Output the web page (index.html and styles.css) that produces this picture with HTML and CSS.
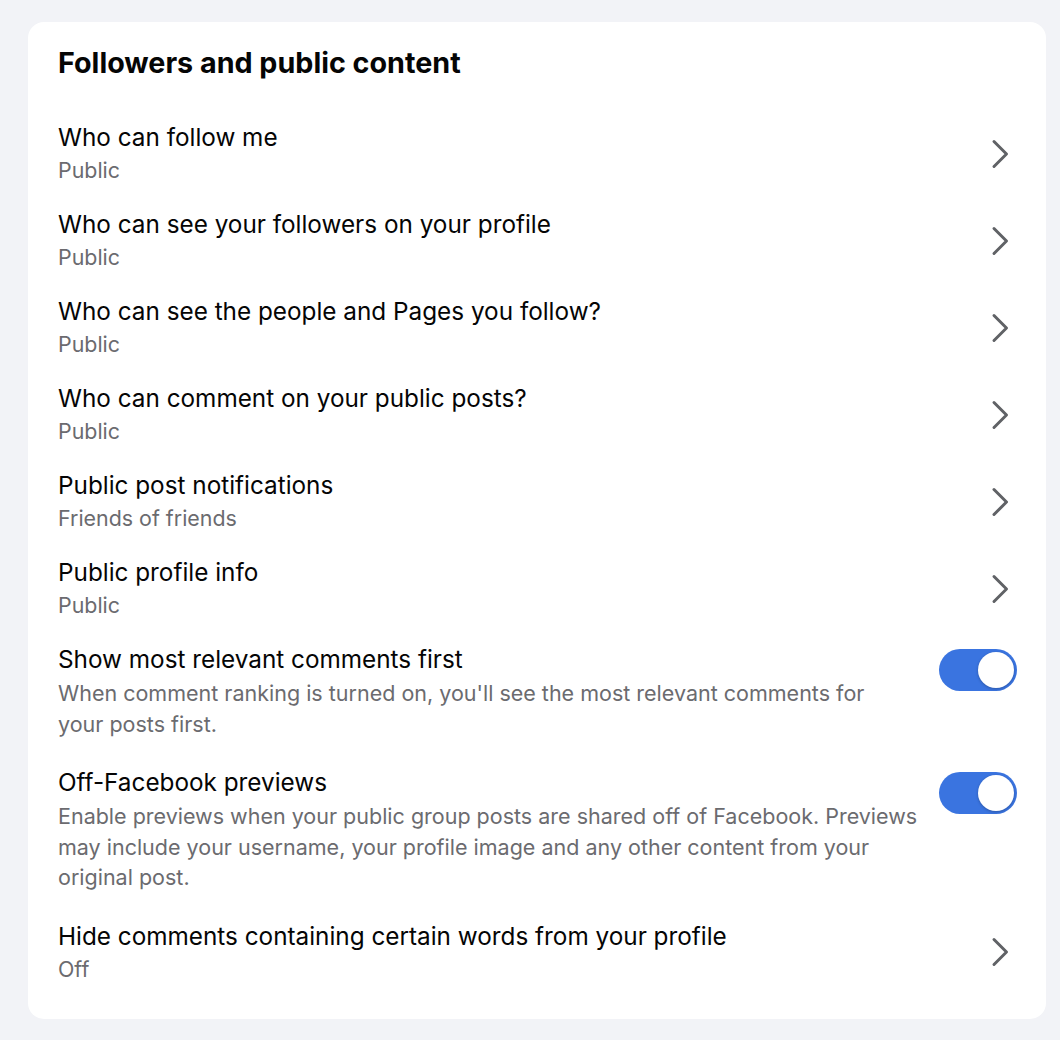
FILE: index.html
```html
<!DOCTYPE html>
<html lang="en">
<head>
<meta charset="utf-8">
<title>Followers and public content</title>
<link rel="stylesheet" href="styles.css">
</head>
<body>
<section class="card">
  <h2 class="card-title">Followers and public content</h2>
  <ul class="rows">
    <li class="row">
      <div class="text"><div class="label">Who can follow me</div><div class="value">Public</div></div>
      <svg class="chev" viewBox="0 0 18 30"><path d="M3 2.5L15.5 15 3 27.5"/></svg>
    </li>
    <li class="row">
      <div class="text"><div class="label">Who can see your followers on your profile</div><div class="value">Public</div></div>
      <svg class="chev" viewBox="0 0 18 30"><path d="M3 2.5L15.5 15 3 27.5"/></svg>
    </li>
    <li class="row">
      <div class="text"><div class="label">Who can see the people and Pages you follow?</div><div class="value">Public</div></div>
      <svg class="chev" viewBox="0 0 18 30"><path d="M3 2.5L15.5 15 3 27.5"/></svg>
    </li>
    <li class="row">
      <div class="text"><div class="label">Who can comment on your public posts?</div><div class="value">Public</div></div>
      <svg class="chev" viewBox="0 0 18 30"><path d="M3 2.5L15.5 15 3 27.5"/></svg>
    </li>
    <li class="row">
      <div class="text"><div class="label">Public post notifications</div><div class="value">Friends of friends</div></div>
      <svg class="chev" viewBox="0 0 18 30"><path d="M3 2.5L15.5 15 3 27.5"/></svg>
    </li>
    <li class="row">
      <div class="text"><div class="label">Public profile info</div><div class="value">Public</div></div>
      <svg class="chev" viewBox="0 0 18 30"><path d="M3 2.5L15.5 15 3 27.5"/></svg>
    </li>
    <li class="row row-toggle">
      <div class="text"><div class="label">Show most relevant comments first</div><div class="desc">When comment ranking is turned on, you'll see the most relevant comments for<br>your posts first.</div></div>
      <span class="toggle on"><span class="knob"></span></span>
    </li>
    <li class="row row-toggle">
      <div class="text"><div class="label">Off-Facebook previews</div><div class="desc">Enable previews when your public group posts are shared off of Facebook. Previews may include your username, your profile image and any other content from your original post.</div></div>
      <span class="toggle on"><span class="knob"></span></span>
    </li>
    <li class="row">
      <div class="text"><div class="label">Hide comments containing certain words from your profile</div><div class="value">Off</div></div>
      <svg class="chev" viewBox="0 0 18 30"><path d="M3 2.5L15.5 15 3 27.5"/></svg>
    </li>
  </ul>
</section>
</body>
</html>
```

FILE: styles.css
```css
html, body {
  margin: 0;
  padding: 0;
  background: #f2f3f7;
}
body {
  font-family: Inter, "Noto Sans", "Liberation Sans", sans-serif;
  color: #050505;
  padding: 22px 14px 22px 28px;
}
.card {
  background: #ffffff;
  border-radius: 16px;
  padding: 25px 29px 23px 30px;
}
.card-title {
  margin: 0 0 31px;
  font-size: 28.7px;
  line-height: 32px;
  font-weight: 700;
}
.rows {
  list-style: none;
  margin: 0;
  padding: 0;
}
.row {
  display: flex;
  align-items: center;
  gap: 16px;
  padding: 12px 0;
}
.row-toggle {
  align-items: flex-start;
  padding-bottom: 16px;
}
.text {
  flex: 1;
  min-width: 0;
}
.label {
  font-size: 24.3px;
  line-height: 30px;
  color: #050505;
}
.value {
  margin-top: 3px;
  font-size: 21.4px;
  line-height: 30px;
  color: #6b6b6f;
}
.desc {
  margin-top: 4px;
  font-size: 21.5px;
  line-height: 30.5px;
  color: #6b6b6f;
}
.chev {
  width: 18px;
  height: 30px;
  margin-right: 8px;
  flex: none;
  fill: none;
  stroke: #606266;
  stroke-width: 3;
  stroke-linecap: round;
  stroke-linejoin: round;
}
.toggle {
  flex: none;
  position: relative;
  width: 78px;
  height: 42px;
  margin-top: 5px;
  border-radius: 21px;
  background: #3a74e0;
}
.knob {
  position: absolute;
  top: 3px;
  right: 3px;
  width: 36px;
  height: 36px;
  border-radius: 50%;
  background: #ffffff;
  box-shadow: 0 1px 3px rgba(0, 0, 0, 0.25);
}
```
